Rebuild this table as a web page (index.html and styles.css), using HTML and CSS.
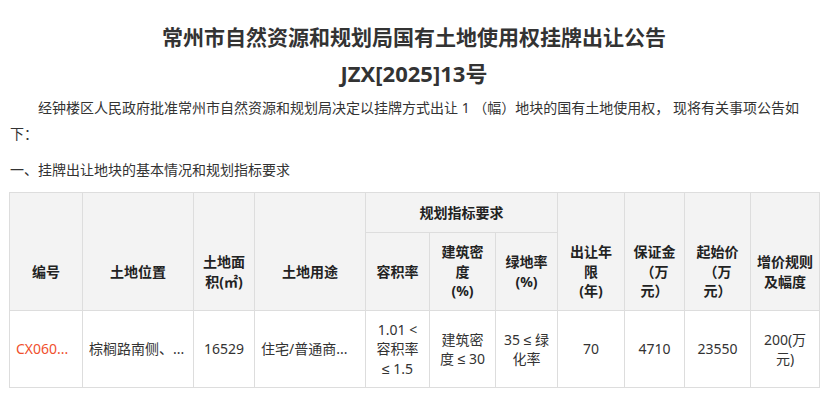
FILE: index.html
```html
<!DOCTYPE html>
<html lang="zh-CN">
<head>
<meta charset="utf-8">
<title>常州市自然资源和规划局国有土地使用权挂牌出让公告</title>
<link rel="stylesheet" href="styles.css">
</head>
<body>
<div class="page">
  <h1 class="title">常州市自然资源和规划局国有土地使用权挂牌出让公告</h1>
  <h2 class="subtitle">JZX[2025]13号</h2>
  <p class="intro">经钟楼区人民政府批准常州市自然资源和规划局决定以挂牌方式出让&nbsp;1&nbsp;（幅）地块的国有土地使用权，&nbsp;现将有关事项公告如下：</p>
  <p class="section">一、挂牌出让地块的基本情况和规划指标要求</p>
  <table class="grid">
    <colgroup>
      <col class="c1"><col class="c2"><col class="c3"><col class="c4"><col class="c5"><col class="c6"><col class="c7"><col class="c8"><col class="c9"><col class="c10"><col class="c11">
    </colgroup>
    <thead>
      <tr class="h1row">
        <th rowspan="2" class="span">编号</th>
        <th rowspan="2" class="span">土地位置</th>
        <th rowspan="2" class="span">土地面<br>积(㎡)</th>
        <th rowspan="2" class="span">土地用途</th>
        <th colspan="3">规划指标要求</th>
        <th rowspan="2" class="span">出让年<br>限<br>(年)</th>
        <th rowspan="2" class="span">保证金<br>（万<br>元）</th>
        <th rowspan="2" class="span">起始价<br>（万<br>元）</th>
        <th rowspan="2" class="span">增价规则<br>及幅度</th>
      </tr>
      <tr class="h2row">
        <th>容积率</th>
        <th>建筑密<br>度<br>(%)</th>
        <th>绿地率<br>(%)</th>
      </tr>
    </thead>
    <tbody>
      <tr class="brow">
        <td><div class="clip code">CX060...</div></td>
        <td><div class="clip left">棕榈路南侧、...</div></td>
        <td>16529</td>
        <td><div class="clip left">住宅/普通商...</div></td>
        <td>1.01 &lt;<br>容积率<br>≤ 1.5</td>
        <td>建筑密<br>度 ≤ 30</td>
        <td>35 ≤ 绿<br>化率</td>
        <td>70</td>
        <td>4710</td>
        <td>23550</td>
        <td>200(万<br>元)</td>
      </tr>
    </tbody>
  </table>
</div>
</body>
</html>
```

FILE: styles.css
```css
html, body {
  margin: 0;
  padding: 0;
  background: #ffffff;
}

body {
  font-family: "Noto Sans", "Liberation Sans", "Noto Sans CJK SC", sans-serif;
  color: #333333;
}

.page {
  padding: 19px 10px 0 9px;
}

.title {
  margin: 0;
  font-size: 21px;
  line-height: 36px;
  font-weight: 700;
  text-align: center;
  color: #333333;
}

.subtitle {
  margin: 0;
  font-size: 22px;
  line-height: 36px;
  font-weight: 700;
  text-align: center;
  color: #333333;
}

.intro {
  margin: 4px 0 0 1px;
  font-size: 14px;
  line-height: 26px;
  text-indent: 2em;
  color: #333333;
}

.section {
  margin: 10px 0 0 1px;
  font-size: 14px;
  line-height: 26px;
  color: #333333;
}

.grid {
  margin-top: 9px;
  width: 810px;
  border-collapse: collapse;
  table-layout: fixed;
  font-size: 14px;
  line-height: 19.5px;
}

.grid th,
.grid td {
  border: 1px solid #dddddd;
  padding: 0 6px;
  text-align: center;
  vertical-align: middle;
}

.grid th {
  background: #f3f3f3;
  font-weight: 700;
  color: #222222;
}

.grid th.span {
  padding-top: 40px;
}

.grid td {
  background: #ffffff;
  color: #333333;
}

.h1row { height: 40px; }
.h2row { height: 78px; }
.brow { height: 77px; }

.c1 { width: 73px; }
.c2 { width: 111px; }
.c3 { width: 61px; }
.c4 { width: 111px; }
.c5 { width: 64px; }
.c6 { width: 66px; }
.c7 { width: 62px; }
.c8 { width: 67px; }
.c9 { width: 60px; }
.c10 { width: 66px; }
.c11 { width: 69px; }

.clip {
  white-space: nowrap;
  overflow: hidden;
  text-overflow: ellipsis;
}

.left { text-align: left; }

.code {
  text-align: left;
  color: #f0502d;
}
```
